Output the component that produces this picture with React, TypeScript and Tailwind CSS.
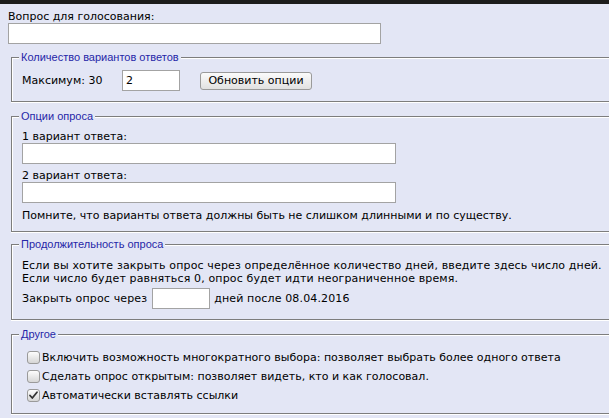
import React from "react";

function Legend({ children }: { children: React.ReactNode }) {
  return (
    <legend className="ml-[-3px] px-[2px] bg-[#e3e6f5] text-[#2626a8] font-['Liberation_Sans',Arial,sans-serif] text-[11px] leading-[13px]">
      {children}
    </legend>
  );
}

function Box({ checked = false }: { checked?: boolean }) {
  return (
    <span className="relative ml-[5px] mr-[2px] inline-block h-[13px] w-[13px] shrink-0 rounded-[3px] border border-[#9a9a9a] bg-gradient-to-b from-[#fdfdfd] to-[#d6d6d6]">
      {checked && (
        <svg viewBox="0 0 13 13" className="absolute left-[-1px] top-[-1px] h-[13px] w-[13px]">
          <path d="M3 6.5 L5.3 9 L10 3.2" fill="none" stroke="#333" strokeWidth="1.8" strokeLinecap="round" strokeLinejoin="round" />
        </svg>
      )}
    </span>
  );
}

const field =
  "ml-[11px] w-[620px] border border-[#7d7d7d] px-[10px] shadow-[inset_1px_1px_0_#fff,0_1px_0_#fff]";
const input = "block h-[21px] border border-[#a3a3a3] bg-white px-[3px] outline-none";

export default function App() {
  return (
    <div className="h-[418px] w-[609px] overflow-hidden bg-[#e3e6f5] font-['DejaVu_Sans',Verdana,sans-serif] text-[11px] leading-[13px] text-black">
      <div className="h-[4px] bg-[#1c1c1c]" />

      <div className="pl-[8px] pt-[6px]">
        <div>Вопрос для голосования:</div>
        <input className={`${input} w-[373px]`} />
      </div>

      <fieldset className={`${field} mt-[7px] pt-[6px] pb-[10px]`}>
        <Legend>Количество вариантов ответов</Legend>
        <div className="flex h-[21px] items-center">
          <span className="w-[100px]">Максимум: 30</span>
          <input className={`${input} w-[58px]`} defaultValue="2" />
          <button className="ml-[20px] h-[18px] w-[112px] rounded-[3px] border border-[#9a9a9a] bg-gradient-to-b from-[#fbfbfb] to-[#e1e1e1] text-[11px] leading-[13px]">
            Обновить опции
          </button>
        </div>
      </fieldset>

      <fieldset className={`${field} mt-[8px] pt-[7px] pb-[9px]`}>
        <Legend>Опции опроса</Legend>
        <div>1 вариант ответа:</div>
        <input className={`${input} w-[374px]`} />
        <div className="mt-[5px]">2 вариант ответа:</div>
        <input className={`${input} w-[374px]`} />
        <div className="mt-[6px]">
          Помните, что варианты ответа должны быть не слишком длинными и по существу.
        </div>
      </fieldset>

      <fieldset className={`${field} mt-[6px] pt-[8px] pb-[10px]`}>
        <Legend>Продолжительность опроса</Legend>
        <div className="whitespace-nowrap tracking-[0.14px]">
          Если вы хотите закрыть опрос через определённое количество дней, введите здесь число дней.
          <br />
          Если число будет равняться 0, опрос будет идти неограниченное время.
        </div>
        <div className="mt-[3px] flex h-[21px] items-center whitespace-nowrap tracking-[0.14px]">
          <span>Закрыть опрос через</span>
          <input className={`${input} ml-[5px] w-[58px]`} />
          <span className="ml-[4px]">дней после 08.04.2016</span>
        </div>
      </fieldset>

      <fieldset className={`${field} mt-[8px] pt-[7px] pb-[8px]`}>
        <Legend>Другое</Legend>
        <div className="flex h-[19px] items-center whitespace-nowrap">
          <Box />
          <span>Включить возможность многократного выбора: позволяет выбрать более одного ответа</span>
        </div>
        <div className="flex h-[19px] items-center whitespace-nowrap">
          <Box />
          <span>Сделать опрос открытым: позволяет видеть, кто и как голосовал.</span>
        </div>
        <div className="flex h-[19px] items-center whitespace-nowrap">
          <Box checked />
          <span>Автоматически вставлять ссылки</span>
        </div>
      </fieldset>
    </div>
  );
}
